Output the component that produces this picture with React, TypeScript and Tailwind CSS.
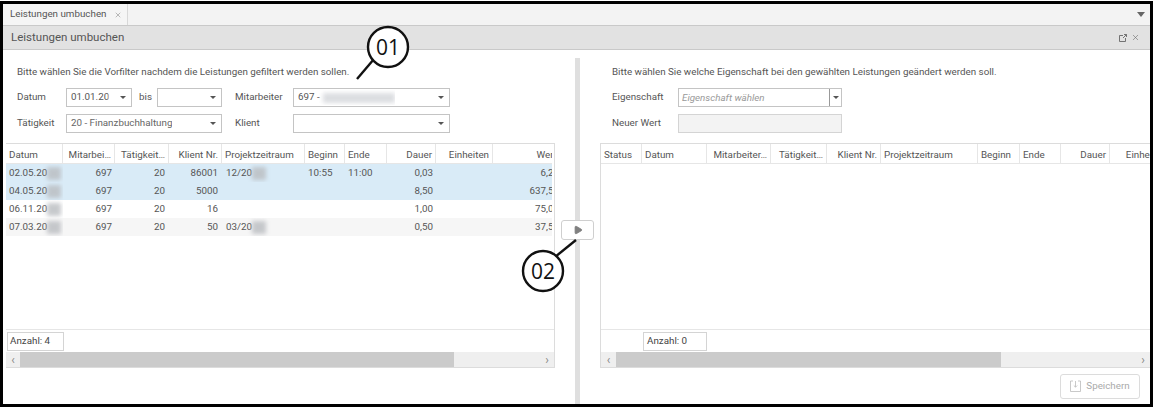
import { Play, X } from "lucide-react";

type Column = { label: string; right?: boolean };

const leftColumns: Column[] = [
  { label: "Datum" },
  { label: "Mitarbei…", right: true },
  { label: "Tätigkeit…", right: true },
  { label: "Klient Nr.", right: true },
  { label: "Projektzeitraum" },
  { label: "Beginn" },
  { label: "Ende" },
  { label: "Dauer", right: true },
  { label: "Einheiten", right: true },
  { label: "Wert", right: true },
];

const rightColumns: Column[] = [
  { label: "Status" },
  { label: "Datum" },
  { label: "Mitarbeiter…", right: true },
  { label: "Tätigkeit…", right: true },
  { label: "Klient Nr.", right: true },
  { label: "Projektzeitraum" },
  { label: "Beginn" },
  { label: "Ende" },
  { label: "Dauer", right: true },
  { label: "Einheiten", right: true },
];

const rows = [
  { date: "02.05.20", mit: "697", tat: "20", kl: "86001", prj: "12/20", from: "10:55", to: "11:00", dauer: "0,03", wert: "6,25", bg: "bg-[#d9ebf7]" },
  { date: "04.05.20", mit: "697", tat: "20", kl: "5000", prj: "", from: "", to: "", dauer: "8,50", wert: "637,50", bg: "bg-[#d9ebf7]" },
  { date: "06.11.20", mit: "697", tat: "20", kl: "16", prj: "", from: "", to: "", dauer: "1,00", wert: "75,00", bg: "bg-white" },
  { date: "07.03.20", mit: "697", tat: "20", kl: "50", prj: "03/20", from: "", to: "", dauer: "0,50", wert: "37,50", bg: "bg-[#f6f6f6]" },
];

const leftGrid = "grid grid-cols-[57px_52px_54px_53px_83px_40px_42px_49px_57px_68px]";
const rightGrid = "grid grid-cols-[41px_65px_64px_56px_54px_97px_42px_41px_49px_60px]";

function Smudge() {
  return <span className="inline-block h-[13px] w-[14px] shrink-0 bg-[#b9bcc0] opacity-80 blur-[2px]" />;
}

function Caret() {
  return <span className="h-0 w-0 border-x-[3px] border-t-[3px] border-x-transparent border-t-[#555]" />;
}

function Select({ className, children }: { className: string; children?: React.ReactNode }) {
  return (
    <div className={`flex items-center justify-between border border-[#c4c4c4] bg-white pl-[4px] pr-[5px] ${className}`}>
      <div className="flex min-w-0 items-center overflow-hidden text-[#555]">{children}</div>
      <Caret />
    </div>
  );
}

function Header({ columns, grid }: { columns: Column[]; grid: string }) {
  return (
    <div className={`${grid} h-[20px] shrink-0 border-b border-[#e6e6e6]`}>
      {columns.map((c) => (
        <div
          key={c.label}
          className={`overflow-hidden whitespace-nowrap border-r border-[#e6e6e6] px-[3px] leading-[21px] text-[#555] ${c.right ? "text-right" : "text-left"}`}
        >
          {c.label}
        </div>
      ))}
    </div>
  );
}

function Scrollbar({ offset, thumb }: { offset: string; thumb: string }) {
  return (
    <div className="flex h-[15px] shrink-0 bg-[#efefef] text-[#888]">
      <div className={`flex items-center justify-center text-[12px] ${offset}`}>‹</div>
      <div className={`bg-[#cbcbcb] ${thumb}`} />
      <div className="ml-auto flex w-[14px] items-center justify-center text-[12px]">›</div>
    </div>
  );
}

function Callout({ label, className, lineFrom, lineTo }: { label: string; className: string; lineFrom: [number, number]; lineTo: [number, number] }) {
  return (
    <svg className={`absolute ${className}`} width="80" height="80" viewBox="0 0 80 80">
      <line x1={lineFrom[0]} y1={lineFrom[1]} x2={lineTo[0]} y2={lineTo[1]} stroke="#111" strokeWidth="2.4" />
      <circle cx="40" cy="40" r="20" fill="#fff" stroke="#111" strokeWidth="2.4" />
      <text x="40" y="47.5" textAnchor="middle" fontSize="21" fill="#111" fontFamily="'Open Sans', sans-serif">
        {label}
      </text>
    </svg>
  );
}

export default function App() {
  return (
    <div className="relative h-[409px] w-[1156px] bg-white pb-[2px] pr-[3px] pt-px text-[9.8px] font-['Roboto',sans-serif] text-[#555]">
      <div className="flex h-full flex-col border-[3px] border-black">
        {/* tab strip */}
        <div className="flex h-[22px] shrink-0 items-stretch border-b border-[#c9c9c9] bg-[#f3f3f3]">
          <div className="flex w-[125px] items-center whitespace-nowrap border-r border-[#d8d8d8] bg-[#f5f5f5] pl-[7px]">
            <span>Leistungen umbuchen</span>
            <X className="ml-[7px] h-[8px] w-[8px] text-[#999]" strokeWidth={2} />
          </div>
          <div className="ml-auto flex items-center pr-[5px]">
            <span className="h-0 w-0 border-x-[4px] border-t-[5px] border-x-transparent border-t-[#666]" />
          </div>
        </div>
        {/* title */}
        <div className="flex h-[24px] shrink-0 items-center justify-between border-b border-[#c9c9c9] bg-[#e2e2e2] pl-[8px] pr-[10px]">
          <span className="text-[11.5px] text-[#555]">Leistungen umbuchen</span>
          <div className="flex items-center gap-[4px] text-[#666]">
            <svg width="8" height="8" viewBox="0 0 8 8" fill="none" stroke="currentColor" strokeWidth="0.9">
              <path d="M4 1.5H0.5V7.5H6.5V4M4 4L7.5 0.5M5 0.5H7.5V3" />
            </svg>
            <X className="h-[9px] w-[9px]" strokeWidth={1.5} />
          </div>
        </div>

        <div className="flex min-h-0 flex-1">
          {/* left side */}
          <div className="flex w-[572px] shrink-0 flex-col pt-[14px]">
            <div className="h-[16px] pl-[14px] leading-[16px]">
              Bitte wählen Sie die Vorfilter nachdem die Leistungen gefiltert werden sollen.
            </div>
            <div className="mt-[8px] flex h-[19px] items-stretch pl-[14px]">
              <div className="flex w-[49px] items-center">Datum</div>
              <Select className="w-[66px]">
                <span>01.01.20</span>
                <span className="h-[13px] w-[14px] bg-white blur-[1px]" />
              </Select>
              <div className="flex w-[25px] items-center pl-[7px]">bis</div>
              <Select className="w-[65px]" />
              <div className="flex w-[71px] items-center pl-[13px]">Mitarbeiter</div>
              <Select className="w-[157px]">
                <span className="whitespace-nowrap">697 -</span>
                <span className="ml-[3px] h-[10px] w-[72px] bg-[#dcdee1] blur-[2px]" />
              </Select>
            </div>
            <div className="mt-[7px] flex h-[19px] items-stretch pl-[14px]">
              <div className="flex w-[49px] items-center">Tätigkeit</div>
              <Select className="w-[156px]">
                <span className="whitespace-nowrap text-[#666]">20 - Finanzbuchhaltung</span>
              </Select>
              <div className="flex w-[71px] items-center pl-[13px]">Klient</div>
              <Select className="w-[157px]" />
            </div>

            <div className="ml-[3px] mt-[10px] flex h-[225px] w-[549px] flex-col border-b border-r border-t border-[#dcdcdc]">
              <div className="w-[546px] min-h-0 flex-1 overflow-hidden">
                <div className="w-[600px]">
                  <Header columns={leftColumns} grid={leftGrid} />
                  {rows.map((r) => (
                    <div key={r.date} className={`${leftGrid} h-[18px] leading-[18px] ${r.bg}`}>
                      <div className="flex items-center overflow-hidden pl-[3px]">
                        {r.date}
                        <Smudge />
                      </div>
                      <div className="pr-[3px] text-right">{r.mit}</div>
                      <div className="pr-[4px] text-right">{r.tat}</div>
                      <div className="pr-[4px] text-right">{r.kl}</div>
                      <div className="flex items-center overflow-hidden pl-[4px]">
                        {r.prj}
                        {r.prj && <Smudge />}
                      </div>
                      <div className="pl-[3px]">{r.from}</div>
                      <div className="pl-[3px]">{r.to}</div>
                      <div className="pr-[3px] text-right">{r.dauer}</div>
                      <div />
                      <div className="pr-[2px] text-right">{r.wert}</div>
                    </div>
                  ))}
                </div>
              </div>
              <div className="h-[23px] shrink-0 border-t border-[#e6e6e6] pl-[1px] pt-[2px]">
                <div className="flex h-[19px] w-[57px] items-center border border-[#d4d4d4] pl-[2px] text-[#444]">Anzahl: 4</div>
              </div>
              <Scrollbar offset="w-[14px]" thumb="w-[434px]" />
            </div>
          </div>

          {/* splitter */}
          <div className="mt-[8px] w-[5px] shrink-0 bg-[#dfdfdf]" />

          {/* right side */}
          <div className="flex min-w-0 flex-1 flex-col pt-[14px]">
            <div className="h-[16px] pl-[32px] leading-[16px]">
              Bitte wählen Sie welche Eigenschaft bei den gewählten Leistungen geändert werden soll.
            </div>
            <div className="mt-[8px] flex h-[19px] items-stretch pl-[32px]">
              <div className="flex w-[66px] items-center">Eigenschaft</div>
              <div className="flex w-[164px] border border-[#c4c4c4]">
                <div className="flex-1 pl-[3px] italic leading-[17px] text-[#999]">Eigenschaft wählen</div>
                <div className="flex w-[12px] items-center justify-center border-l border-[#999]">
                  <Caret />
                </div>
              </div>
            </div>
            <div className="mt-[7px] flex h-[19px] items-stretch pl-[32px]">
              <div className="flex w-[66px] items-center">Neuer Wert</div>
              <div className="w-[164px] border border-[#d4d4d4] bg-[#f3f3f3]" />
            </div>

            <div className="ml-[20px] mt-[10px] flex h-[225px] flex-col border-b border-l border-t border-[#dcdcdc]">
              <div className="min-h-0 flex-1 overflow-hidden">
                <div className="w-[600px]">
                  <Header columns={rightColumns} grid={rightGrid} />
                </div>
              </div>
              <div className="h-[23px] shrink-0 border-t border-[#e6e6e6] pl-[42px] pt-[2px]">
                <div className="flex h-[19px] w-[64px] items-center border border-[#d4d4d4] pl-[3px] text-[#444]">Anzahl: 0</div>
              </div>
              <Scrollbar offset="w-[15px]" thumb="w-[385px]" />
            </div>
            <div className="flex flex-1 items-center justify-end pr-[10px]">
              <button className="flex h-[25px] w-[80px] items-center justify-center gap-[5px] rounded-[3px] border border-[#dcdcdc] bg-white text-[#aaa]">
                <svg width="11" height="12" viewBox="0 0 11 12" fill="none" stroke="#bbb" strokeWidth="0.8">
                  <path d="M3 1H0.5V11.5H10.5V1H8M5.5 1V7M3.8 5.5L5.5 7.2L7.2 5.5" />
                </svg>
                Speichern
              </button>
            </div>
          </div>
        </div>
      </div>

      {/* transfer button sits over the splitter */}
      <button className="absolute left-[561px] top-[220px] flex h-[20px] w-[33px] items-center justify-center rounded-[3px] border border-[#cfcfcf] bg-white">
        <Play className="h-[10px] w-[10px] fill-[#808080] text-[#808080]" />
      </button>

      <Callout label="01" className="left-[348px] top-[7px]" lineFrom={[26, 52]} lineTo={[9, 72]} />
      <Callout label="02" className="left-[503px] top-[231px]" lineFrom={[52, 26]} lineTo={[73, 9]} />
    </div>
  );
}
